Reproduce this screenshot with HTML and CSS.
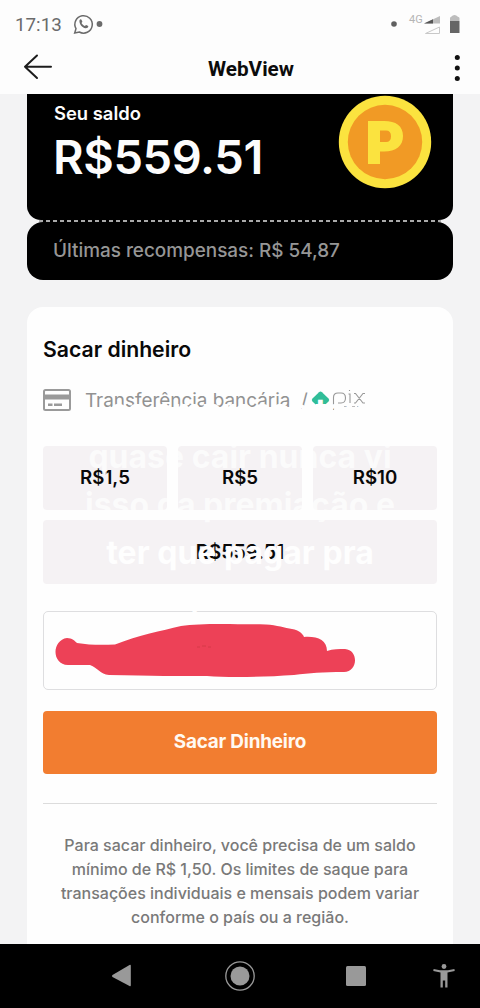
FILE: index.html
```html
<!DOCTYPE html>
<html lang="pt-BR">
<head>
<meta charset="utf-8">
<meta name="viewport" content="width=device-width">
<title>WebView</title>
<link rel="stylesheet" href="styles.css">
</head>
<body>
<div class="screen">
  <header class="status">
    <span class="clock">17:13</span>
    <svg class="status-chat" width="32" height="24" viewBox="0 0 32 24" fill="none" stroke="#6b6b6b">
      <path d="M1.700 21 3 16.700A8.700 8.700 0 1 1 6.300 20Z" stroke-width="1.500"/>
      <path d="M6.500 8.200c.5-.9 1.700-1.200 2.100-.3l.8 1.900-.9 1.300c.8 1.500 1.900 2.400 3.300 3l1.300-1.200 2.200 1.100c.1 1.700-1.600 2.400-2.800 2.200-3.300-.5-6.600-4.500-6-8Z" fill="#6b6b6b" stroke="none"/>
      <circle cx="26.500" cy="12" r="2.900" fill="#6b6b6b" stroke="none"/>
    </svg>
    <svg class="status-signal" width="72" height="24" viewBox="0 0 72 24">
      <circle cx="5" cy="12" r="2.800" fill="#606060"/>
      <text class="network" x="20" y="11">4G</text>
      <path d="M35 11.500 51 4v7.500Z" fill="#bdbdbd"/>
      <path d="M35 11.500 44 7.300v4.200Z" fill="#555"/>
      <path d="M36.500 21.500 50.500 15v6.500Z" fill="none" stroke="#c8c8c8"/>
      <path d="M61 9V6q0-1 1.500-1.500Q63.500 3 65.500 3t3 1.500Q70.500 5 70.500 6v3Z" fill="#bdbdbd"/>
      <path d="M61 9h9.500v12H61Z" fill="#666"/>
    </svg>
  </header>
  <nav class="appbar">
    <svg width="30" height="28" viewBox="0 0 30 28" fill="none" stroke="#1c1c1c" stroke-width="2"><path d="M28 12.700H2M14 1.500 2 12.700 14 24" stroke-linecap="round" stroke-linejoin="round"/></svg>
    <h1 class="title">WebView</h1>
    <svg width="6" height="28" viewBox="0 0 6 28" fill="#111"><circle cx="3.300" cy="3.500" r="2.500"/><circle cx="3.300" cy="14" r="2.500"/><circle cx="3.300" cy="24.500" r="2.500"/></svg>
  </nav>
  <main class="content">
    <section class="balance">
      <div>
        <p class="balance-label">Seu saldo</p>
        <p class="balance-value">R$559.51</p>
      </div>
      <svg class="coin" width="94" height="94" viewBox="0 0 94 94">
        <circle cx="47" cy="47" r="46.200" fill="#fbe33f"/>
        <circle cx="47" cy="47" r="37.200" fill="#f19a25"/>
        <path fill-rule="evenodd" d="M30 26H46C58 26 65 31 65 41S58 56.500 46 56.500H42V69H30ZM42 35.500V47H48Q53 47 53 41.200 53 35.500 48 35.500Z" fill="#fbe33f"/>
      </svg>
    </section>
    <div class="perforation"></div>
    <section class="rewards">Últimas recompensas: R$ 54,87</section>
    <section class="withdraw">
      <h2 class="heading">Sacar dinheiro</h2>
      <div class="method">
        <svg width="28" height="22" viewBox="0 0 28 22"><rect x="1" y="1" width="26" height="20" rx="1.500" fill="none" stroke="#9a9a9a" stroke-width="2"/><path d="M1 5.500h26v5H1ZM5 14.500h4.500v2.500H5ZM11 14.500h8v2.500h-8Z" fill="#9a9a9a"/></svg>
        <span class="method-name">Transferência bancária</span>
        <span class="slash">/</span>
        <svg class="pix" width="55" height="24" viewBox="0 0 55 24" fill="none">
          <path d="M7 4.200Q8.500 3 10 4.200L16.500 10.500Q18 12 16.500 13.500L10 19.800Q8.500 21 7 19.800L.5 13.500Q-1 12 .5 10.500Z" fill="#30bd98"/>
          <path d="M21.500 22V9.500Q21.500 5 26 5h3Q33.500 5 33.500 10T29 15H26M36.500 6h1.500v9M42 5.500h1.500L51 15h2M42 15h1.500L51 5.500h2M37.500 2v1" stroke="#999" stroke-width="1.100"/>
          <path d="M21 18.500h3m2 0h3m3 0h3m5 0h3m2 0h3" stroke="#bbb" stroke-width="1"/>
        </svg>
      </div>
      <div class="amounts">
        <button class="amount">R$1,5</button>
        <button class="amount">R$5</button>
        <button class="amount">R$10</button>
        <button class="amount amount-wide">R$559.51</button>
      </div>
      <div class="field">
        <svg width="302" height="56" viewBox="0 0 302 56"><path d="M12 14C17 14 20 17 22 19 34 21 46 21 60 20.500 84 11 106 7 126 2 146 -1 176 0 211 .5 222 1 230 4 237 5 244 6 248 10 249 13 262 12 272 16 272 27 278 25 284 25 290 25 304 26 303 48 289 48 267 48 255 49 239 51 209 53 175 54 152 52 126 52 96 52 54 51 45 50 43 44 35 41H13C-4 40-3 16 12 14Z" fill="#ed4157"/><path d="M142 23h3m2-1h4m2 1h3" stroke="#d63b48"/></svg>
      </div>
      <button class="submit">Sacar Dinheiro</button>
      <hr class="rule">
      <p class="note">Para sacar dinheiro, você precisa de um saldo<br>mínimo de R$ 1,50. Os limites de saque para<br>transações individuais e mensais podem variar<br>conforme o país ou a região.</p>
    </section>
  </main>
  <div class="caption">
    <p class="caption-first">as empresas tava</p>
    <p class="caption-soft">quase cair nunca vi</p>
    <p class="caption-soft">isso da premiação e</p>
    <p>ter que pagar pra</p>
    <p class="caption-tail">,</p>
  </div>
  <footer class="system-nav">
    <svg width="480" height="64" viewBox="0 0 480 64" fill="#999">
      <path d="M112.500 31 129.500 21q1.300-.6 1.300.8v19.500q0 1.300-1.300.7L112.500 33q-1.200-1 0-2Z"/>
      <circle cx="240" cy="32" r="9.500"/><circle cx="240" cy="32" r="14.200" fill="none" stroke="#999" stroke-width="1.300"/>
      <rect x="346" y="22" width="20" height="20" rx="1.500"/>
      <circle cx="444" cy="22.500" r="2.400"/>
      <path d="M433.600 25 440 26.200h8l6.400-1.200.3 2-7.200 1.500V43.500h-2.300V36.500h-2.400v7h-2.300V28.500L433.300 27Z"/>
    </svg>
  </footer>
</div>
</body>
</html>
```
FILE: styles.css
```css
* { box-sizing: border-box; }
body, p, h1, h2 { margin: 0; }
body { font-family: Inter, "Liberation Sans", sans-serif; background: #f3f3f4; }
svg { display: block; flex: none; overflow: visible; }
button { border: 0; padding: 0; font: inherit; }
.screen { position: relative; width: 480px; height: 1008px; display: flex; flex-direction: column; overflow: hidden; }
.status { height: 44px; flex: none; background: #fdfdfd; display: flex; align-items: center; padding: 4px 19px 0 15px; }
.clock { width: 58px; padding-top: 2px; font: 18.800px/24px Roboto, sans-serif; color: #6b6b6b; }
.status-signal { margin-left: auto; }
.network { font: 11px Roboto, sans-serif; fill: #b5b5b5; }
.appbar { height: 50px; flex: none; background: #fdfdfd; display: flex; align-items: center; justify-content: space-between; padding: 0 20px 2px 23px; }
.title { font: 700 20.700px/28px Roboto, sans-serif; color: #0c0c0c; margin-right: 5px; padding-top: 1px; }
.content { flex: 1; min-height: 0; padding: 0 27px; overflow: hidden; }
.balance { height: 126px; padding: 7px 21px 0 27px; display: flex; justify-content: space-between; background: #000; border-radius: 0 0 14px 14px; color: #fcfcfc; }
.balance-label { font-size: 18.400px; line-height: 24px; font-weight: 600; }
.balance-value { font-size: 47px; line-height: 56px; margin: 4px 0 0 -1px; font-weight: 600; letter-spacing: -0.400px; }
.coin { margin-top: -6px; }
.perforation { height: 2px; margin: 0 12px; background: repeating-linear-gradient(90deg, #aaa 0 4px, #000 4px 7px); }
.rewards { height: 58px; background: #000; color: #969696; border-radius: 16px; padding-left: 26px; font-size: 18.900px; line-height: 58px; font-weight: 500; }
.withdraw { margin-top: 27px; height: 660px; padding: 28px 16px 0; border-radius: 16px; background: #fefefe; }
.heading { font-size: 21.200px; line-height: 28px; font-weight: 600; color: #090909; }
.method { display: flex; align-items: center; height: 28px; margin-top: 23px; color: #929292; font-size: 18.900px; }
.method-name { width: 205px; margin-left: 14px; white-space: nowrap; }
.slash { width: 22px; padding-left: 11px; }
.amounts { display: grid; grid-template-columns: repeat(3, 1fr); gap: 10px 11px; margin-top: 32px; }
.amount { height: 64px; border-radius: 4px; padding-bottom: 1px; background: #f5f2f4; color: #090909; font-size: 18.700px; font-weight: 600; }
.amount-wide { grid-column: 1 / -1; font-size: 19.500px; }
.field { height: 79px; margin-top: 27px; padding: 12px 11px; border: 1.500px solid #dedee0; border-radius: 5px; }
.submit { display: block; width: 100%; height: 63px; margin-top: 21px; padding-bottom: 2px; border-radius: 4px; background: #f27d30; color: #fff9f2; font-size: 18.900px; font-weight: 700; letter-spacing: -0.200px; }
.rule { height: 1px; margin: 29px 0; border: 0; background: #dcdcdc; }
.note { font-size: 16px; line-height: 24px; text-align: center; color: #797979; white-space: nowrap; font-weight: 500; }
.caption { position: absolute; top: 385px; left: 0; width: 480px; text-align: center; font-size: 32px; line-height: 48px; font-weight: 700; color: #fefefe; }
.caption-first { padding: 2px 0 0 12px; height: 48px; }
.caption-soft { opacity: 0.75; }
.caption-tail { padding-right: 90px; }
.system-nav { position: relative; flex: none; height: 64px; background: #000; }
```
